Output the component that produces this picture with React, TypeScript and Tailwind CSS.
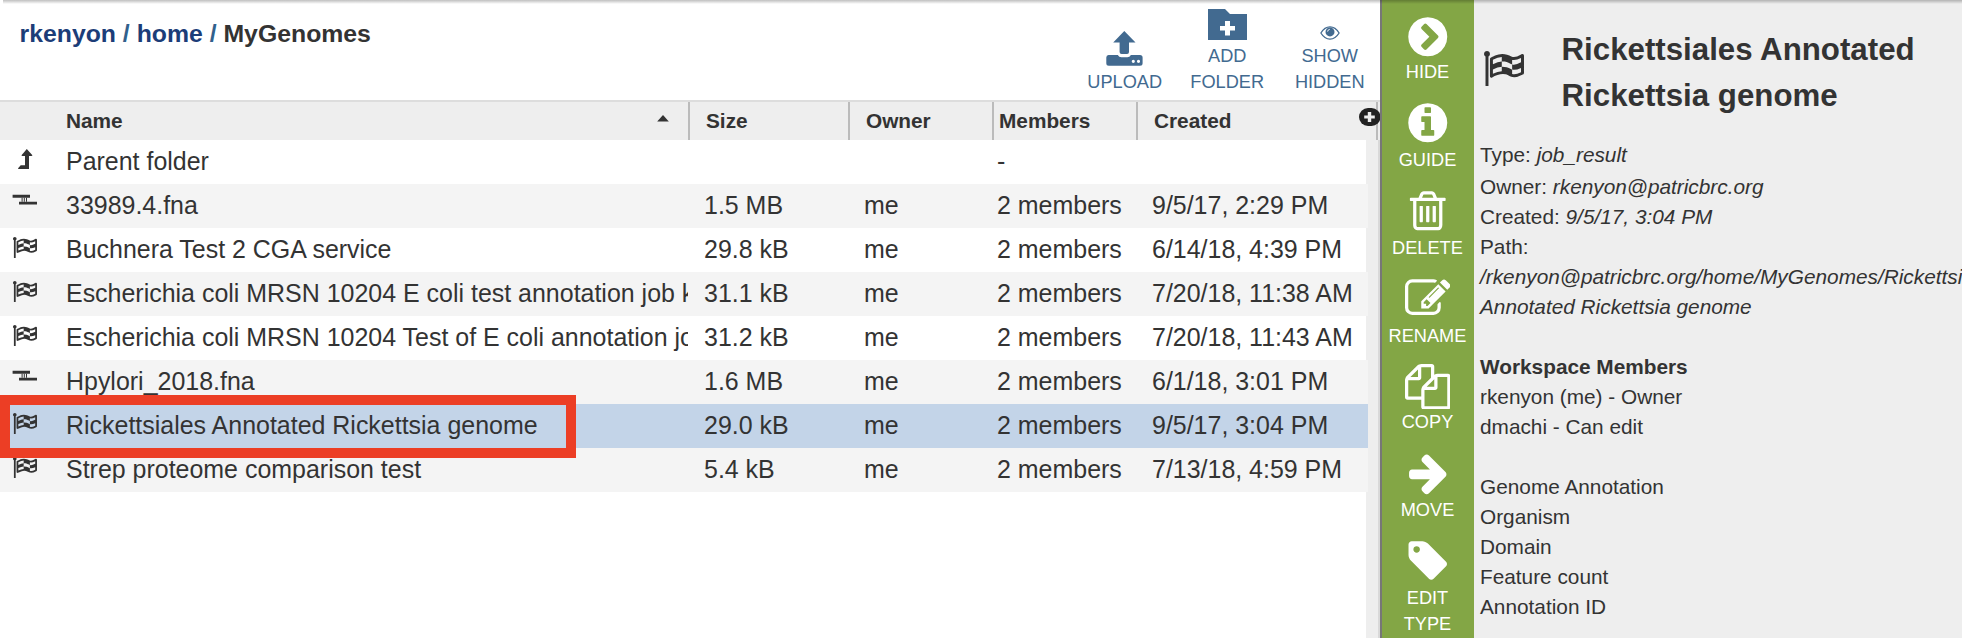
import React from "react";

const ICONS = {
  hide: {
    w: 1536,
    d: "M717 141l454 454q19 19 19 45t-19 45l-454 454q-19 19 -45 19t-45 -19l-102 -102q-19 -19 -19 -45t19 -45l307 -307l-307 -307q-19 -19 -19 -45t19 -45l102 -102q19 -19 45 -19t45 19zM1536 640q0 -209 -103 -385.5t-279.5 -279.5t-385.5 -103t-385.5 103t-279.5 279.5t-103 385.5t103 385.5t279.5 279.5t385.5 103t385.5 -103t279.5 -279.5t103 -385.5z",
  },
  guide: {
    w: 1536,
    d: "M1024 160v160q0 14 -9 23t-23 9h-96v512q0 14 -9 23t-23 9h-320q-14 0 -23 -9t-9 -23v-160q0 -14 9 -23t23 -9h96v-320h-96q-14 0 -23 -9t-9 -23v-160q0 -14 9 -23t23 -9h448q14 0 23 9t9 23zM896 1056v160q0 14 -9 23t-23 9h-192q-14 0 -23 -9t-9 -23v-160q0 -14 9 -23t23 -9h192q14 0 23 9t9 23zM1536 640q0 -209 -103 -385.5t-279.5 -279.5t-385.5 -103t-385.5 103t-279.5 279.5t-103 385.5t103 385.5t279.5 279.5t385.5 103t385.5 -103t279.5 -279.5t103 -385.5z",
  },
  trash: {
    w: 1408,
    d: "M512 800v-576q0 -14 -9 -23t-23 -9h-64q-14 0 -23 9t-9 23v576q0 14 9 23t23 9h64q14 0 23 -9t9 -23zM768 800v-576q0 -14 -9 -23t-23 -9h-64q-14 0 -23 9t-9 23v576q0 14 9 23t23 9h64q14 0 23 -9t9 -23zM1024 800v-576q0 -14 -9 -23t-23 -9h-64q-14 0 -23 9t-9 23v576q0 14 9 23t23 9h64q14 0 23 -9t9 -23zM1152 76v948h-896v-948q0 -22 7 -40.5t14.5 -27t10.5 -8.5h832q3 0 10.5 8.5t14.5 27t7 40.5zM480 1152h448l-48 117q-7 9 -17 11h-317q-10 -2 -17 -11zM1408 1120v-64q0 -14 -9 -23t-23 -9h-96v-948q0 -83 -47 -143.5t-113 -60.5h-832q-66 0 -113 58.5t-47 141.5v952h-96q-14 0 -23 9t-9 23v64q0 14 9 23t23 9h309l70 167q15 37 54 63t79 26h320q40 0 79 -26t54 -63l70 -167h309q14 0 23 -9t9 -23z",
  },
  rename: {
    w: 1792,
    d: "M888 352l116 116l-152 152l-116 -116v-56h96v-96h56zM1328 1072q-16 16 -33 -1l-350 -350q-17 -17 -1 -33t33 1l350 350q17 17 1 33zM1408 478v-190q0 -119 -84.5 -203.5t-203.5 -84.5h-832q-119 0 -203.5 84.5t-84.5 203.5v832q0 119 84.5 203.5t203.5 84.5h832q63 0 117 -25q15 -7 18 -23q3 -17 -9 -29l-49 -49q-14 -14 -32 -8q-23 6 -45 6h-832q-66 0 -113 -47t-47 -113v-832q0 -66 47 -113t113 -47h832q66 0 113 47t47 113v126q0 13 9 22l64 64q15 15 35 7t20 -29zM1312 1216l288 -288l-672 -672h-288v288zM1756 1084l-92 -92l-288 288l92 92q28 28 68 28t68 -28l152 -152q28 -28 28 -68t-28 -68z",
  },
  copy: {
    w: 1792,
    d: "M1696 1152q40 0 68 -28t28 -68v-1216q0 -40 -28 -68t-68 -28h-960q-40 0 -68 28t-28 68v288h-544q-40 0 -68 28t-28 68v672q0 40 20 88t48 76l408 408q28 28 76 48t88 20h416q40 0 68 -28t28 -68v-328q68 40 128 40h416zM1152 939l-299 -299h299v299zM512 1323l-299 -299h299v299zM708 676l316 316v416h-384v-416q0 -40 -28 -68t-68 -28h-416v-640h512v256q0 40 20 88t48 76zM1664 -128v1152h-384v-416q0 -40 -28 -68t-68 -28h-416v-640h896z",
  },
  move: {
    w: 1472,
    d: "M1472 576q0 -54 -37 -91l-651 -651q-39 -37 -91 -37q-51 0 -90 37l-75 75q-38 38 -38 91t38 91l293 293h-704q-52 0 -84.5 37.5t-32.5 90.5v128q0 53 32.5 90.5t84.5 37.5h704l-293 294q-38 36 -38 90t38 90l75 75q38 38 90 38q53 0 91 -38l651 -651q37 -35 37 -90z",
  },
  tag: {
    w: 1515,
    d: "M448 1088q0 53 -37.5 90.5t-90.5 37.5t-90.5 -37.5t-37.5 -90.5t37.5 -90.5t90.5 -37.5t90.5 37.5t37.5 90.5zM1515 512q0 -53 -37 -90l-491 -492q-39 -37 -91 -37q-53 0 -90 37l-715 716q-38 37 -64.5 101t-26.5 117v416q0 52 38 90t90 38h416q53 0 117 -26.5t102 -64.5l715 -714q37 -39 37 -91z",
  },
};

const FLAG =
  "M832 536v192q-181 -16 -384 -117v-185q205 96 384 110zM832 954v197q-172 -8 -384 -126v-189q215 111 384 118zM1664 491v184q-235 -116 -384 -71v224q-20 6 -39 15q-5 3 -33 17t-34.5 17t-31.5 15t-34.5 15.5t-32.5 13t-36 12.5t-35 8.5t-39.5 7.5t-39.5 4t-44 2q-23 0 -49 -3v-222h19q102 0 192.5 -29t197.5 -82q19 -9 39 -15v-188q42 -17 91 -17q120 0 293 92zM1664 918v189q-169 -91 -306 -91q-45 0 -78 8v-196q148 -42 384 90zM320 1280q0 -35 -17.5 -64t-46.5 -46v-1266q0 -14 -9 -23t-23 -9h-64q-14 0 -23 9t-9 23v1266q-29 17 -46.5 46t-17.5 64q0 53 37.5 90.5t90.5 37.5t90.5 -37.5t37.5 -90.5zM1792 1216v-763q0 -39 -35 -57q-10 -5 -17 -9q-218 -116 -369 -116q-88 0 -158 35l-28 14q-64 33 -99 48t-91 29t-114 14q-102 0 -235.5 -44t-228.5 -102q-15 -9 -33 -9q-16 0 -32 8q-32 19 -32 56v742q0 35 31 55q35 21 78.5 42.5t114 52t152.5 49.5t155 19q112 0 209 -31t209 -86q38 -19 89 -19q122 0 310 112q22 12 31 17q31 16 62 -2q31 -20 31 -54z";

function Flag({ className }: { className: string }) {
  return (
    <svg className={className} viewBox="64 -1408 1728 1536" fill="currentColor">
      <path transform="scale(1,-1)" fillRule="evenodd" d={FLAG} />
    </svg>
  );
}

function RowIcon({ kind }: { kind: string }) {
  if (kind === "flag") return <Flag className="ml-[13px] mt-[9px] h-[21.3px] w-6" />;
  if (kind === "contigs")
    return (
      <svg className="ml-3 mt-2.5 h-3 w-[26px]" viewBox="0 0 26 12" fill="currentColor">
        <path d="M.6 .8H18v3H.6zM7 7.7h18v2.8H7z" />
        <path d="M9.6 3.8h1v4h-1zM11.8 3.8h1v4h-1zM14 3.8h1v4h-1z" />
      </svg>
    );
  return (
    <svg className="ml-[18px] mt-[9px] h-5 w-[15px]" viewBox="0 0 15 20" fill="currentColor">
      <path d="M8.8 0L14.4 6.3Q14.3 7 13.5 7H11V20H.4Q-.2 19.8 .3 19L2.7 16.2H7V7H4.4Q3.5 7 3.5 6.3Z" />
    </svg>
  );
}

type Row = { icon: string; name: string; size: string; owner: string; members: string; created: string };

const ROWS: Row[] = [
  { icon: "up", name: "Parent folder", size: "", owner: "", members: "-", created: "" },
  { icon: "contigs", name: "33989.4.fna", size: "1.5 MB", owner: "me", members: "2 members", created: "9/5/17, 2:29 PM" },
  { icon: "flag", name: "Buchnera Test 2 CGA service", size: "29.8 kB", owner: "me", members: "2 members", created: "6/14/18, 4:39 PM" },
  { icon: "flag", name: "Escherichia coli MRSN 10204 E coli test annotation job k", size: "31.1 kB", owner: "me", members: "2 members", created: "7/20/18, 11:38 AM" },
  { icon: "flag", name: "Escherichia coli MRSN 10204 Test of E coli annotation jo", size: "31.2 kB", owner: "me", members: "2 members", created: "7/20/18, 11:43 AM" },
  { icon: "contigs", name: "Hpylori_2018.fna", size: "1.6 MB", owner: "me", members: "2 members", created: "6/1/18, 3:01 PM" },
  { icon: "flag", name: "Rickettsiales Annotated Rickettsia genome", size: "29.0 kB", owner: "me", members: "2 members", created: "9/5/17, 3:04 PM" },
  { icon: "flag", name: "Strep proteome comparison test", size: "5.4 kB", owner: "me", members: "2 members", created: "7/13/18, 4:59 PM" },
];

const SELECTED = 6;

function rowClass(i: number) {
  if (i === SELECTED) return "w-[1368px] bg-[#c3d4e8]";
  return i % 2 ? "w-[1368px] bg-[#f4f4f4]" : "w-[1366px] bg-white";
}

function FileRow({ row, index }: { row: Row; index: number }) {
  return (
    <div className={"relative flex h-11 shrink-0 overflow-hidden whitespace-nowrap text-[24.96px] leading-[43px] " + rowClass(index)}>
      <div className="w-[66px] shrink-0"><RowIcon kind={row.icon} /></div>
      <div className="w-[622px] shrink-0 overflow-hidden">{row.name}</div>
      <div className="w-[160px] shrink-0 pl-[16px]">{row.size}</div>
      <div className="w-[144px] shrink-0 pl-[16px]">{row.owner}</div>
      <div className="w-[144px] shrink-0 pl-[5px]">{row.members}</div>
      <div className="pl-[16px]">{row.created}</div>
    </div>
  );
}

function TableHead() {
  return (
    <div className="relative flex h-10 shrink-0 overflow-hidden border-t-2 border-[#ddd] bg-[#eee] text-[20.8px] font-bold leading-[38px]">
      <div className="flex w-[690px] shrink-0 items-start justify-between border-r-2 border-[#bbb] pl-[66px] pr-[19px]">
        <span>Name</span>
        <svg className="mt-[13px] h-[7px] w-3" viewBox="0 0 12 7" fill="currentColor"><path d="M6 0L11.8 6.6H.2Z" /></svg>
      </div>
      <div className="w-[160px] shrink-0 border-r-2 border-[#bbb] pl-[16px]">Size</div>
      <div className="w-[144px] shrink-0 border-r-2 border-[#bbb] pl-[16px]">Owner</div>
      <div className="w-[144px] shrink-0 border-r-2 border-[#bbb] pl-[5px]">Members</div>
      <div className="w-[240px] shrink-0 border-r-2 border-[#bbb] pl-[16px]">Created</div>
      <svg className="absolute left-[1359px] top-[6px] h-[18px] w-[22px]" viewBox="0 0 22 18">
        <rect width="21.5" height="18" rx="9" fill="#222" />
        <path d="M8.8 4h3.4v3.4h3.6v3.2h-3.6V14H8.8v-3.4H5.2V7.4h3.6z" fill="#eee" />
      </svg>
    </div>
  );
}

function Tool({ icon, label }: { icon: React.ReactNode; label: string[] }) {
  return (
    <div className="flex w-[102.5px] flex-col items-center text-[18.2px] leading-[26px]">
      {icon}
      {label.map((l) => <span key={l}>{l}</span>)}
    </div>
  );
}

function Toolbar() {
  return (
    <div className="-mr-px flex h-[95px] items-end text-[#426a90]">
      <Tool
        label={["UPLOAD"]}
        icon={
          <svg className="mb-[3px] h-[35px] w-[37px]" viewBox="0 0 37 35" fill="currentColor">
            <path d="M18.3 0L29.5 11.6H23V21q0 2-2 2h-5.4q-2 0-2-2v-9.4H7.2Z" />
            <path fillRule="evenodd" d="M2.500 24H11.800q1.200 2.200 3.600 2.200h5.900q2.400 0 3.600-2.200H34q2.600 0 2.600 2.500v5.700q0 2.500-2.600 2.500H2.800Q.3 34.700 .3 32.200V26.500Q.3 24 2.500 24ZM27.300 28.700a1.600 1.600 0 1 0 0 3.200a1.600 1.600 0 1 0 0-3.200ZM32.500 28.700a1.600 1.600 0 1 0 0 3.200a1.600 1.600 0 1 0 0-3.200Z" />
          </svg>
        }
      />
      <Tool
        label={["ADD", "FOLDER"]}
        icon={
          <svg className="mb-[3px] h-[31px] w-[39px]" viewBox="0 0 39 31">
            <path d="M0 0H17L22 5H39V31H0Z" fill="currentColor" />
            <path d="M17 12h5v5h5v4.600h-5v5h-5v-5h-5V17h5z" fill="#fff" />
          </svg>
        }
      />
      <Tool
        label={["SHOW", "HIDDEN"]}
        icon={
          <svg className="mb-[3.5px] h-[14px] w-5" viewBox="0 0 20 14" fill="none" stroke="currentColor">
            <path d="M.9 7Q4.600 .9 10 .9T19.100 7Q15.400 13.100 10 13.100T.9 7Z" strokeWidth="1.300" />
            <circle cx="10" cy="5.900" r="4.500" fill="currentColor" stroke="none" />
            <path d="M7.600 5.600Q7.700 3.600 9.800 3.300" stroke="#fff" strokeWidth=".9" />
          </svg>
        }
      />
    </div>
  );
}

const ACTIONS: { icon: keyof typeof ICONS; label: string[]; tight?: boolean }[] = [
  { icon: "hide", label: ["HIDE"], tight: true },
  { icon: "guide", label: ["GUIDE"] },
  { icon: "trash", label: ["DELETE"] },
  { icon: "rename", label: ["RENAME"] },
  { icon: "copy", label: ["COPY"], tight: true },
  { icon: "move", label: ["MOVE"] },
  { icon: "tag", label: ["EDIT", "TYPE"] },
];

function ActionBar() {
  return (
    <nav className="-mt-px flex w-[94px] shrink-0 flex-col border-l-2 border-[#777] bg-[#83a645] pr-px text-[18.2px] leading-[26px] text-white">
      {ACTIONS.map(({ icon, label, tight }) => (
        <div key={icon} className="flex flex-col items-center pt-[14.5px]">
          <svg
            className={"h-[45.5px] w-[45.5px] " + (tight ? "" : "mb-[2px]")}
            viewBox={`${(ICONS[icon].w - 1792) / 2} -1536 1792 1792`}
            fill="currentColor"
          >
            <path transform="scale(1,-1)" d={ICONS[icon].d} />
          </svg>
          {label.map((l) => <span key={l}>{l}</span>)}
        </div>
      ))}
    </nav>
  );
}

function Details() {
  return (
    <aside className="min-w-0 flex-1 overflow-hidden bg-[#eee] pl-[6px] text-[20.8px] leading-[30px]">
      <div className="flex h-[140px] pt-[27px]">
        <div className="w-[81.5px] shrink-0 pl-1 pt-[23.5px]"><Flag className="h-[35.5px] w-10" /></div>
        <h2 className="w-[380px] text-[31.25px] font-bold leading-[46px]">Rickettsiales Annotated Rickettsia genome</h2>
      </div>
      <div className="mb-[2px]">Type: <i>job_result</i></div>
      <div>Owner: <i>rkenyon@patricbrc.org</i></div>
      <div>Created: <i>9/5/17, 3:04 PM</i></div>
      <div>Path:</div>
      <div className="whitespace-nowrap italic">/rkenyon@patricbrc.org/home/MyGenomes/Rickettsiales</div>
      <div className="italic">Annotated Rickettsia genome</div>
      <div className="mt-[30px] font-bold">Workspace Members</div>
      <div>rkenyon (me) - Owner</div>
      <div>dmachi - Can edit</div>
      <div className="mt-[30px]">Genome Annotation</div>
      <div>Organism</div>
      <div>Domain</div>
      <div>Feature count</div>
      <div>Annotation ID</div>
    </aside>
  );
}

export default function App() {
  return (
    <div className="relative flex h-[638px] w-[1962px] overflow-hidden bg-white font-['Liberation_Sans',Arial,sans-serif] text-[#333]">
      <main className="flex w-[1380px] shrink-0 flex-col">
        <header className="flex h-[100px] shrink-0 justify-between">
          <div className="pl-[19.5px] pt-[18px] text-[24.8px] font-bold leading-8">
            <span className="text-[#1c3d78]">rkenyon</span>
            <span className="text-[#31618c]"> / </span>
            <span className="text-[#1c3d78]">home</span>
            <span className="text-[#31618c]"> / </span>
            <span>MyGenomes</span>
          </div>
          <Toolbar />
        </header>
        <TableHead />
        <div className="flex flex-1 border-r-2 border-[#d9d9d9] bg-[#eee]">
          <div className="flex w-[1368px] flex-col">
            {ROWS.map((row, i) => <FileRow key={row.name} row={row} index={i} />)}
            <div className="w-[1366px] flex-1 bg-white" />
          </div>
        </div>
      </main>
      <ActionBar />
      <Details />
      <div className="absolute left-[3px] right-0 top-0 h-1 bg-linear-to-b from-black/25 to-transparent" />
      <div className="absolute left-0 top-[395px] h-[63px] w-[576px] border-[10px] border-[#ec3e25]" />
    </div>
  );
}
